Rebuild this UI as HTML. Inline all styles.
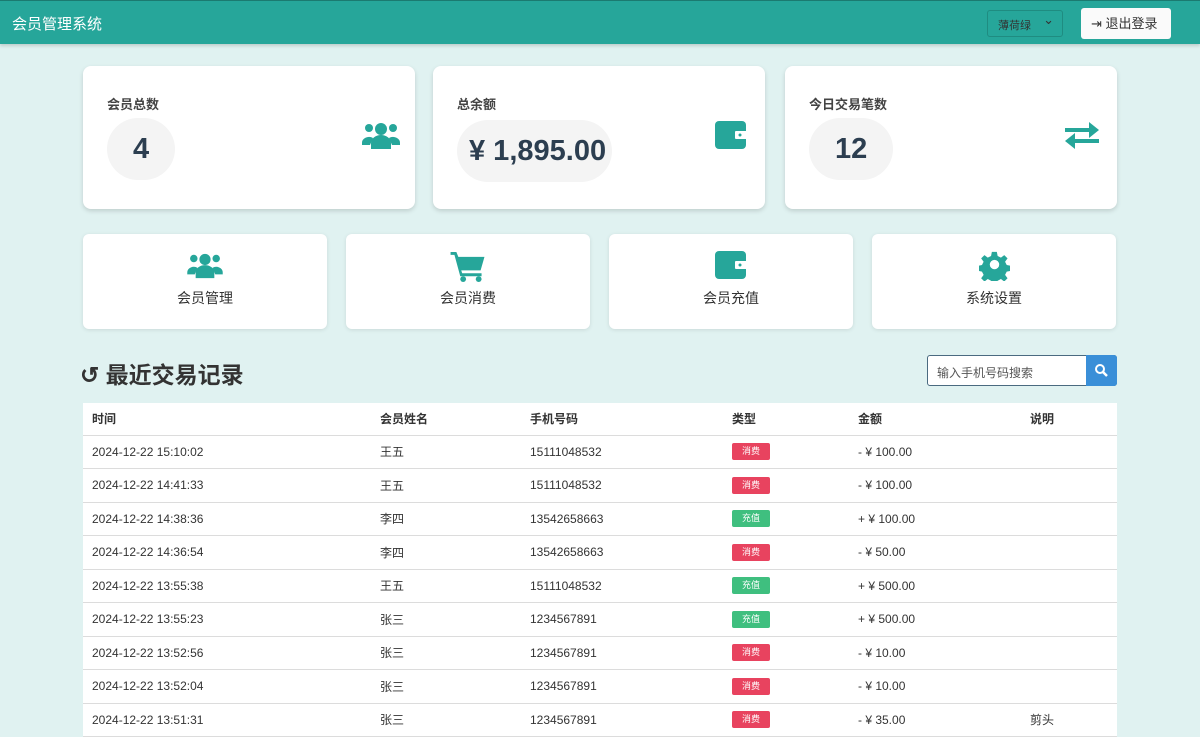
<!DOCTYPE html>
<html><head><meta charset="utf-8"><style>
*{box-sizing:border-box;margin:0;padding:0}
body{width:1200px;height:722px;overflow:hidden;background:#e0f2f1;font-family:"Liberation Sans","Noto Sans CJK SC",sans-serif;color:#333;position:relative}
.hdr{position:absolute;left:0;top:0;width:1200px;height:44px;background:#26a69a;border-top:1px solid #1b7a70;box-shadow:0 2px 3px rgba(0,0,0,.15)}
.hdr .t{position:absolute;left:12px;top:12px;color:#fff;font-size:15px}
.sel{position:absolute;left:987px;top:9px;width:76px;height:27px;border:1px solid #1f8c81;border-radius:3px;color:#333;font-size:11px;padding:6px 0 0 10px}
.sel:after{content:"⌄";position:absolute;right:8px;top:1px;font-size:13px}
.btn{position:absolute;left:1081px;top:7px;width:90px;height:31px;background:#fafafa;border-radius:3px;font-size:13px;line-height:31px;padding-left:10px;color:#333}
.card{position:absolute;background:#fff;border-radius:8px;box-shadow:0 2px 5px rgba(0,0,0,.15)}
.card .l{position:absolute;left:24px;top:28px;font-size:13px;font-weight:bold;color:#444}
.card .v{position:absolute;left:24px;top:52px;height:62px;border-radius:31px;background:#f4f4f4;font-size:29px;font-weight:bold;color:#2c3e50;line-height:62px;padding:0 26px}
.card .ic{position:absolute;right:14px;top:55px}
.act{position:absolute;top:234px;width:244px;height:95px;background:#fff;border-radius:6px;box-shadow:0 1px 4px rgba(0,0,0,.1);text-align:center;font-size:14px;color:#333}
.act .ib{height:30px;margin:17px 0 7px;display:flex;justify-content:center;align-items:center}
h2{position:absolute;left:80px;top:356px;font-size:23px;font-weight:bold;color:#333}
.srch{position:absolute;left:927px;top:355px;width:190px;height:31px;border:1px solid #4a6a80;border-radius:3px;background:#fff;font-size:12px;color:#555;padding:8px 0 0 9px}
.srch b{position:absolute;right:-1px;top:-1px;width:31px;height:31px;background:#3a8fd8;border-radius:0 3px 3px 0}
table{position:absolute;left:83px;top:403px;width:1034px;border-collapse:collapse;background:#fff;font-size:12px}
td,th{height:33.5px;padding:0 9px;text-align:left;border-bottom:1px solid #dcdcdc;color:#333}
th{font-weight:bold;height:32px}
.tg{display:inline-block;color:#fff;font-size:9px;width:38px;height:17px;line-height:17px;text-align:center;border-radius:2px}
.r{background:#e8435f}.g{background:#3fbf7f}
</style></head><body>
<div class="hdr"><div class="t">会员管理系统</div><div class="sel">薄荷绿</div><div class="btn">⇥ 退出登录</div></div>

<div class="card" style="left:83px;top:66px;width:332px;height:143px"><div class="l">会员总数</div><div class="v">4</div>
<svg class="ic" width="40" height="30" viewBox="0 0 40 30" fill="#26a69a"><circle cx="20" cy="8" r="6"/><circle cx="8" cy="7" r="4"/><circle cx="32" cy="7" r="4"/><path d="M10 28v-6a10 8 0 0 1 20 0v6z"/><path d="M1 22a7 6 0 0 1 11-5l-3 7H1z"/><path d="M39 22a7 6 0 0 0-11-5l3 7h8z"/></svg></div>
<div class="card" style="left:433px;top:66px;width:332px;height:143px"><div class="l">总余额</div><div class="v" style="padding:0 6px 0 12px;top:54px">¥ 1,895.00</div>
<svg class="ic" style="right:18px" width="32" height="30" viewBox="0 0 32 30" fill="#26a69a"><rect x="0" y="0" width="31" height="28" rx="4"/><rect x="20" y="10" width="12" height="8" fill="#fff" rx="1"/><circle cx="25" cy="14" r="1.5"/></svg></div>
<div class="card" style="left:785px;top:66px;width:332px;height:143px"><div class="l">今日交易笔数</div><div class="v">12</div>
<svg class="ic" style="right:18px" width="34" height="28" viewBox="0 0 34 28" fill="#26a69a"><path d="M0 7h24V1l10 8-10 8v-6H0z"/><path d="M34 21H10v-6L0 23l10 8v-6h24z" transform="translate(0,-3)"/></svg></div>

<div class="act" style="left:83px"><div class="ib"><svg width="40" height="28" viewBox="0 0 40 30" fill="#26a69a"><circle cx="20" cy="8" r="6"/><circle cx="8" cy="7" r="4"/><circle cx="32" cy="7" r="4"/><path d="M10 28v-6a10 8 0 0 1 20 0v6z"/><path d="M1 22a7 6 0 0 1 11-5l-3 7H1z"/><path d="M39 22a7 6 0 0 0-11-5l3 7h8z"/></svg></div>会员管理</div>
<div class="act" style="left:346px"><div class="ib"><svg width="36" height="31" viewBox="0 0 36 32" fill="#26a69a"><path d="M0 1h6l2 5h27l-4 14H11l1 3h20v3H10L4 4H0z"/><circle cx="13" cy="29" r="3"/><circle cx="29" cy="29" r="3"/></svg></div>会员消费</div>
<div class="act" style="left:609px"><div class="ib"><svg width="32" height="30" viewBox="0 0 32 30" fill="#26a69a"><rect x="0" y="0" width="31" height="28" rx="4"/><rect x="20" y="10" width="12" height="8" fill="#fff" rx="1"/><circle cx="25" cy="14" r="1.5"/></svg></div>会员充值</div>
<div class="act" style="left:872px"><div class="ib"><svg width="31" height="30" viewBox="0 0 32 32" fill="#26a69a"><path d="M13 1h6l1 5 4 2 4-3 4 4-3 4 2 4 5 1v6l-5 1-2 4 3 4-4 4-4-3-4 2-1 5h-6l-1-5-4-2-4 3-4-4 3-4-2-4-5-1v-6l5-1 2-4-3-4 4-4 4 3 4-2z" transform="scale(.88) translate(2,0)"/><circle cx="16" cy="14.5" r="5" fill="#fff"/></svg></div>系统设置</div>

<h2>↺ 最近交易记录</h2>
<div class="srch">输入手机号码搜索<b><svg width="31" height="31" viewBox="0 0 31 31"><circle cx="14" cy="14" r="4" stroke="#fff" stroke-width="2" fill="none"/><path d="M17 17l4 4" stroke="#fff" stroke-width="2.5"/></svg></b></div>

<table>
<tr><th style="width:288px">时间</th><th style="width:150px">会员姓名</th><th style="width:202px">手机号码</th><th style="width:126px">类型</th><th style="width:172px">金额</th><th>说明</th></tr>
<tr><td>2024-12-22 15:10:02</td><td>王五</td><td>15111048532</td><td><span class="tg r">消费</span></td><td>- ¥ 100.00</td><td></td></tr>
<tr><td>2024-12-22 14:41:33</td><td>王五</td><td>15111048532</td><td><span class="tg r">消费</span></td><td>- ¥ 100.00</td><td></td></tr>
<tr><td>2024-12-22 14:38:36</td><td>李四</td><td>13542658663</td><td><span class="tg g">充值</span></td><td>+ ¥ 100.00</td><td></td></tr>
<tr><td>2024-12-22 14:36:54</td><td>李四</td><td>13542658663</td><td><span class="tg r">消费</span></td><td>- ¥ 50.00</td><td></td></tr>
<tr><td>2024-12-22 13:55:38</td><td>王五</td><td>15111048532</td><td><span class="tg g">充值</span></td><td>+ ¥ 500.00</td><td></td></tr>
<tr><td>2024-12-22 13:55:23</td><td>张三</td><td>1234567891</td><td><span class="tg g">充值</span></td><td>+ ¥ 500.00</td><td></td></tr>
<tr><td>2024-12-22 13:52:56</td><td>张三</td><td>1234567891</td><td><span class="tg r">消费</span></td><td>- ¥ 10.00</td><td></td></tr>
<tr><td>2024-12-22 13:52:04</td><td>张三</td><td>1234567891</td><td><span class="tg r">消费</span></td><td>- ¥ 10.00</td><td></td></tr>
<tr><td>2024-12-22 13:51:31</td><td>张三</td><td>1234567891</td><td><span class="tg r">消费</span></td><td>- ¥ 35.00</td><td>剪头</td></tr>
</table>
</body></html>
